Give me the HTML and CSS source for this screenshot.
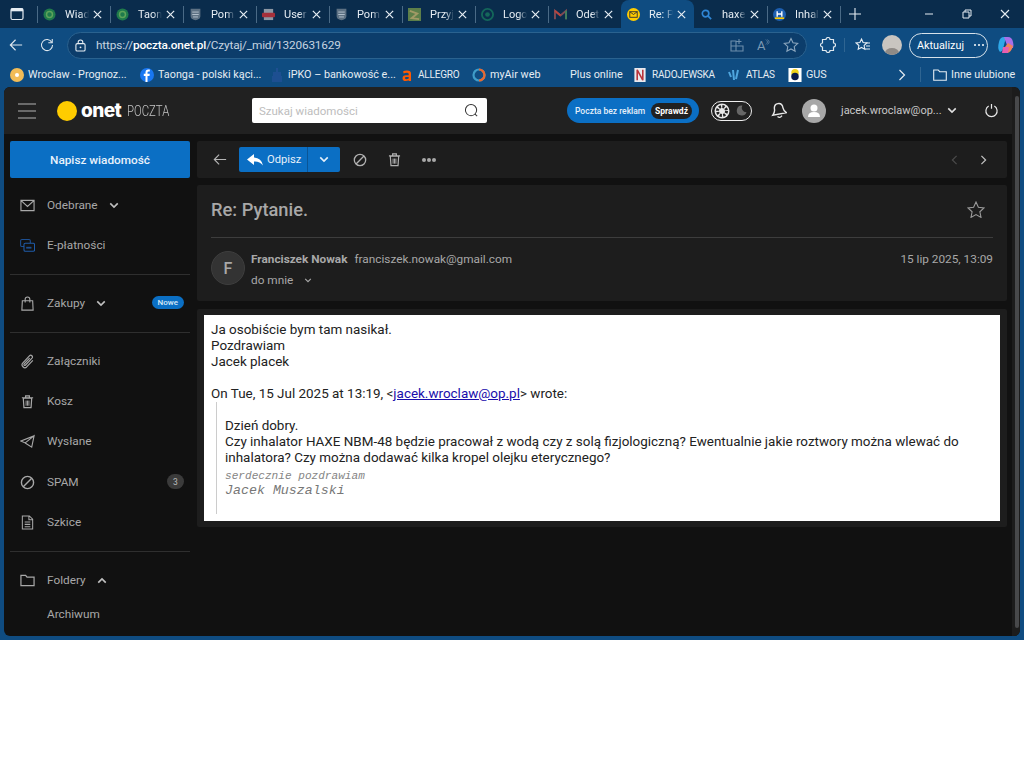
FILE: index.html
```html
<!DOCTYPE html>
<html lang="pl">
<head>
<meta charset="utf-8">
<title>Re: Pytanie.</title>
<link rel="stylesheet" href="styles.css">
</head>
<body>
<svg class="defs" width="0" height="0" aria-hidden="true">
  <symbol id="x" viewBox="0 0 12 12"><path d="M2 2l8 8M10 2l-8 8" fill="none" stroke="currentColor" stroke-width="1.300"/></symbol>
  <symbol id="swirl" viewBox="0 0 14 14"><circle cx="7" cy="7" r="6.500" fill="#1f7a4c"/><circle cx="7" cy="7" r="3.200" fill="none" stroke="#5da35a" stroke-width="1.600"/></symbol>
  <symbol id="philips" viewBox="0 0 14 16"><path d="M1 1h12v9c0 3-3 4-6 5-3-1-6-2-6-5z" fill="#5d7183"/><path d="M3 5h8M3 8h8M4 11h6" stroke="#c4d0da" stroke-width="1"/></symbol>
  <symbol id="chev" viewBox="0 0 12 8"><path d="M1.500 1.500L6 6l4.500-4.500" fill="none" stroke="currentColor" stroke-width="1.900"/></symbol>
  <symbol id="trash" viewBox="0 0 14 16"><path d="M1 4h12M5 4V2h4v2M2.500 4.500h9l-.7 10H3.200z" fill="none" stroke="currentColor" stroke-width="1.300"/><path d="M5.500 7v5.500M7 7v5.500M8.500 7v5.500" stroke="currentColor"/></symbol>
  <symbol id="block" viewBox="0 0 16 16"><circle cx="8" cy="8" r="6.500" fill="none" stroke="currentColor" stroke-width="1.500"/><path d="M3.500 12.500l9-9" stroke="currentColor" stroke-width="1.500"/></symbol>
</svg>

<div class="screen">
  <div class="tabstrip">
    <svg class="tabs-btn" viewBox="0 0 14 14"><rect x="1" y="1.500" width="12" height="11" rx="1.500" fill="none" stroke="#e6edf3" stroke-width="1.200"/><rect x="1" y="1.500" width="12" height="2.800" fill="#e6edf3"/></svg>
    <div class="tab sep"><svg class="ti"><use href="#swirl"/></svg><span class="tl">Wiad</span><svg class="tx"><use href="#x"/></svg></div>
    <div class="tab sep"><svg class="ti"><use href="#swirl"/></svg><span class="tl">Taon</span><svg class="tx"><use href="#x"/></svg></div>
    <div class="tab sep"><svg class="ti"><use href="#philips"/></svg><span class="tl">Pom</span><svg class="tx"><use href="#x"/></svg></div>
    <div class="tab sep"><svg class="ti" viewBox="0 0 14 14"><rect x="2" y="1" width="10" height="12" fill="#8d97a3"/><rect x="0" y="5" width="14" height="5" rx="1" fill="#a5303a"/></svg><span class="tl">User</span><svg class="tx"><use href="#x"/></svg></div>
    <div class="tab sep"><svg class="ti"><use href="#philips"/></svg><span class="tl">Pom</span><svg class="tx"><use href="#x"/></svg></div>
    <div class="tab sep"><svg class="ti" viewBox="0 0 14 14"><rect width="14" height="14" fill="#5d7f4a"/><path d="M2 3l8 3-6 5 8 1" fill="none" stroke="#a19a66" stroke-width="2"/></svg><span class="tl">Przyj</span><svg class="tx"><use href="#x"/></svg></div>
    <div class="tab sep"><svg class="ti" viewBox="0 0 14 14"><circle cx="7" cy="7" r="6" fill="none" stroke="#14675a" stroke-width="2"/><circle cx="7" cy="7" r="2.500" fill="#14675a"/></svg><span class="tl">Logo</span><svg class="tx"><use href="#x"/></svg></div>
    <div class="tab sep"><svg class="ti" viewBox="0 0 14 12"><path d="M1 11V2l6 5 6-5v9" fill="none" stroke="#7d4a55" stroke-width="2.200"/><path d="M1 2l6 5" stroke="#b8453f" stroke-width="2"/><path d="M13 2v9" stroke="#3f7f5c" stroke-width="2"/></svg><span class="tl">Odet</span><svg class="tx"><use href="#x"/></svg></div>
    <div class="tab active"><svg class="ti" viewBox="0 0 14 14"><circle cx="7" cy="7" r="7" fill="#fc0"/><rect x="3" y="4" width="8" height="6" fill="none" stroke="#333" stroke-width="1"/><path d="M3 4l4 3 4-3" fill="none" stroke="#333"/></svg><span class="tl">Re: P</span><svg class="tx"><use href="#x"/></svg></div>
    <div class="tab"><svg class="ti" viewBox="0 0 14 14"><circle cx="6" cy="6" r="3.500" fill="none" stroke="#2f86d6" stroke-width="1.800"/><path d="M8.500 8.500L12 12" stroke="#2f86d6" stroke-width="1.800"/></svg><span class="tl">haxe</span><svg class="tx"><use href="#x"/></svg></div>
    <div class="tab sep"><svg class="ti" viewBox="0 0 14 14"><circle cx="7" cy="7" r="7" fill="#1d5fb0"/><path d="M4.500 3.500v6M9.500 3.500v6M4.500 6.500h5" stroke="#fff" stroke-width="1.500"/><path d="M2 11h10" stroke="#fc0" stroke-width="1.800"/></svg><span class="tl">Inhal</span><svg class="tx"><use href="#x"/></svg></div>
    <div class="newtab sep"><svg viewBox="0 0 12 12"><path d="M6 0v12M0 6h12" stroke="#e6edf3" stroke-width="1.100"/></svg></div>
    <div class="winctl">
      <svg viewBox="0 0 10 10"><path d="M1 5h8" stroke="#e6edf3"/></svg>
      <svg viewBox="0 0 10 10"><path d="M1 3h6v6H1zM3 3V1h6v6H7" fill="none" stroke="#e6edf3"/></svg>
      <svg viewBox="0 0 10 10"><path d="M1 1l8 8M9 1l-8 8" stroke="#e6edf3" stroke-width="1.100"/></svg>
    </div>
  </div>

  <div class="toolbar">
    <svg class="nav-ic" viewBox="0 0 16 16"><path d="M15 8H1.500M7.500 2L1.500 8l6 6" fill="none" stroke="#dfe8ef" stroke-width="1.300"/></svg>
    <svg class="nav-ic reload" viewBox="0 0 16 16"><path d="M13.500 5A6.300 6.300 0 1 0 14.300 8" fill="none" stroke="#dfe8ef" stroke-width="1.200"/><path d="M14 1v4.500H9.500" fill="none" stroke="#dfe8ef" stroke-width="1.200"/></svg>
    <div class="address">
      <svg class="lock" viewBox="0 0 12 14"><rect x="1" y="5" width="10" height="8" rx="1.500" fill="none" stroke="#e6edf3" stroke-width="1.200"/><path d="M3.500 5V3.500a2.500 2.500 0 0 1 5 0V5" fill="none" stroke="#e6edf3" stroke-width="1.200"/><circle cx="6" cy="9" r="1" fill="#e6edf3"/></svg>
      <span class="url">https://<b>poczta.onet.pl</b>/Czytaj/_mid/1320631629</span>
      <svg class="addr-ic" viewBox="0 0 14 14"><path d="M1 3h5v10H1zM6 8h7v5H6zM1 8h5M9 1v5M6.500 3.500h5" fill="none" stroke="#6d8eab" stroke-width="1.100"/></svg>
      <span class="readout">A<svg viewBox="0 0 6 8"><path d="M1 1q2 1.500 2 3T1 7M3 1q2 1.500 2 3T3 7" fill="none" stroke="#6d8eab" stroke-width=".8"/></svg></span>
      <svg class="addr-star" viewBox="0 0 16 16"><path d="M8 1.500l2 4.300 4.700.6-3.500 3.200.9 4.700L8 12l-4.100 2.300.9-4.700L1.300 6.400 6 5.800z" fill="none" stroke="#8ba6be" stroke-width="1.100"/></svg>
    </div>
    <svg class="tool-ic ext" viewBox="0 0 16 16"><path d="M6 2.500a2 2 0 0 1 4 0h3.500V6a2 2 0 0 1 0 4v3.500H10a2 2 0 0 1-4 0H2.500V10a2 2 0 0 1 0-4V2.500z" fill="none" stroke="#dfe8ef" stroke-width="1.200"/></svg>
    <span class="tool-sep"></span>
    <svg class="tool-ic" viewBox="0 0 16 16"><path d="M6.500 2l1.600 3.500 3.700.5-2.700 2.500.7 3.700-3.300-1.800L3.200 12.200l.7-3.700L1.200 6l3.700-.5z" fill="none" stroke="#e6edf3" stroke-width="1.100"/><path d="M11 6h4M11 9h4M10 12h5" stroke="#e6edf3"/></svg>
    <span class="profile"><i></i></span>
    <div class="update"><span>Aktualizuj</span><span class="dots"><i></i><i></i><i></i></span></div>
    <svg class="copilot" viewBox="0 0 20 20"><path d="M3 7q1-5 5-5h2L7 14q-1 3-3 3-3-3-1-10z" fill="#2fa8e8"/><path d="M8 2h4q4 0 5 5 1 3 0 6h-5z" fill="#a870e8"/><path d="M7 18h4q4 0 6-7l-5-3-3 4z" fill="#f2825a"/><path d="M7 12h6l-1 6H6z" fill="#e85fb0"/></svg>
  </div>

  <div class="bookmarks">
    <div class="bm"><svg class="bi" viewBox="0 0 14 14"><circle cx="7" cy="7" r="7" fill="#f2bc57"/><circle cx="7" cy="7" r="2" fill="#fff"/></svg>Wrocław - Prognoz...</div>
    <div class="bm"><svg class="bi" viewBox="0 0 14 14"><circle cx="7" cy="7" r="7" fill="#1877f2"/><path d="M7.500 14V8H9.500l.3-2.200H7.500V4.500q0-1 1.200-1h1.100V1.600H8.300Q5.500 1.600 5.500 4.400v1.400H3.800V8h1.700v6z" fill="#fff"/></svg>Taonga - polski kąci...</div>
    <div class="bm"><svg class="bi" viewBox="0 0 14 14"><path d="M6 0h2v4H6zM3 4h8v4H3zM2 8h10v6H2z" fill="#1d4f91"/></svg>iPKO – bankowość e...</div>
    <div class="bm caps"><svg class="bi" viewBox="0 0 14 14"><path d="M3 3.500q1-1 4-1 4 0 4 3V13H8.700v-.8Q7.500 13 5.500 13 2.500 13 2.500 10.200t3.500-3H8.700V6q0-1.200-2-1.200-1.500 0-3 .8zM8.700 9H6.200q-1.300 0-1.300 1.100t1.300 1.100q1.400 0 2.500-.7z" fill="#ff5a00"/></svg>ALLEGRO</div>
    <div class="bm"><svg class="bi" viewBox="0 0 14 14"><circle cx="7" cy="7" r="5.500" fill="none" stroke="#3f9cc8" stroke-width="2.200"/><path d="M7 1.500a5.500 5.500 0 0 1 0 11" fill="none" stroke="#e8672f" stroke-width="2.200"/></svg>myAir web</div>
    <div class="bm">Plus online</div>
    <div class="bm caps"><svg class="bi narrow" viewBox="0 0 12 15"><rect width="12" height="15" fill="#e9e9ee"/><path d="M3 13V2l6 11V2" fill="none" stroke="#b8343c" stroke-width="1.700"/></svg>RADOJEWSKA</div>
    <div class="bm caps"><svg class="bi narrow" viewBox="0 0 12 12"><path d="M1 3l2 5M5 1l1 10M10 1L8 10" stroke="#4fa6de" stroke-width="2"/></svg>ATLAS</div>
    <div class="bm"><svg class="bi" viewBox="0 0 14 15"><rect width="14" height="15" fill="#fff"/><circle cx="7" cy="5" r="4" fill="#f2d21b"/><circle cx="7" cy="9" r="4" fill="#0c1c4d"/></svg>GUS</div>
    <svg class="bm-more" viewBox="0 0 8 12"><path d="M1.500 1l5 5-5 5" fill="none" stroke="#e6edf3" stroke-width="1.200"/></svg>
    <span class="bm-sep"></span>
    <div class="bm bm-other"><svg class="bi" viewBox="0 0 14 12"><path d="M.7 11.300V1h4.500l1.500 1.700h6.600v8.600z" fill="none" stroke="#e6edf3" stroke-width="1.100"/></svg>Inne ulubione</div>
  </div>

  <div class="appframe">
    <div class="app">
      <div class="appmain">
        <header class="apphead">
          <div class="burger"><i></i><i></i><i></i></div>
          <div class="logo"><span class="sunny"></span><span class="onet">onet</span><span class="poczta">POCZTA</span></div>
          <div class="search"><span>Szukaj wiadomości</span><svg viewBox="0 0 16 16"><circle cx="7.500" cy="7.500" r="6" fill="none" stroke="#333" stroke-width="1.100"/><path d="M11.800 11.800l2.200 2.200" stroke="#333" stroke-width="1.100"/></svg></div>
          <div class="promo"><span>Poczta bez reklam</span><b>Sprawdź</b></div>
          <div class="theme">
            <svg viewBox="0 0 16 16"><circle cx="8" cy="8" r="7.500" fill="#e8e8e8"/><circle cx="8" cy="8" r="4.500" fill="none" stroke="#222" stroke-width="3" stroke-dasharray="2.200 1.300"/></svg>
            <svg viewBox="0 0 12 12"><path d="M7 .5a5.500 5.500 0 1 0 4.500 7.500A5 5 0 0 1 7 .5z" fill="#666"/></svg>
          </div>
          <svg class="bell" viewBox="0 0 16 17"><path d="M8 1.500c3 0 4.300 2.200 4.300 5 0 3 1.500 4.300 2.700 5.500H1c1.200-1.200 2.700-2.500 2.700-5.500 0-2.800 1.300-5 4.300-5z" fill="none" stroke="#e8e8e8" stroke-width="1.400" transform="rotate(-10 8 8)"/><path d="M6.500 14.500q2.500 2 4.500-.8" fill="none" stroke="#e8e8e8" stroke-width="1.300"/></svg>
          <div class="user-av"><svg viewBox="0 0 24 24"><circle cx="12" cy="9" r="3.500" fill="#fff"/><path d="M6 18q0-5 6-5t6 5z" fill="#fff"/></svg></div>
          <span class="email">jacek.wroclaw@op...</span>
          <svg class="email-chev"><use href="#chev"/></svg>
          <svg class="power" viewBox="0 0 16 16"><path d="M5 3.300a6 6 0 1 0 6 0M8 1v5" fill="none" stroke="#e8e8e8" stroke-width="1.300"/></svg>
        </header>

        <div class="columns">
          <aside class="sidebar">
            <div class="compose">Napisz wiadomość</div>
            <nav class="nav">
              <div class="item"><svg class="ic" viewBox="0 0 16 14"><path d="M1 1.500h14v11H1zM1.500 2l6.500 6 6.500-6" fill="none" stroke="currentColor" stroke-width="1.200"/></svg><span>Odebrane</span><svg class="ch"><use href="#chev"/></svg></div>
              <div class="item"><svg class="ic" viewBox="0 0 17 15"><rect x=".7" y=".7" width="11" height="8" rx="1.500" fill="none" stroke="#1d4f91" stroke-width="1.200"/><rect x="4.500" y="5" width="12" height="9" rx="1.500" fill="#111" stroke="#1f5ba8" stroke-width="1.200"/><rect x="7" y="9" width="6" height="2" fill="#1d4f91"/></svg><span>E-płatności</span></div>
              <hr>
              <div class="item"><svg class="ic" viewBox="0 0 14 16"><path d="M1.500 5h11l.5 10H1zM4.500 7V3.500a2.500 2.500 0 0 1 5 0V7" fill="none" stroke="currentColor" stroke-width="1.200"/></svg><span>Zakupy</span><svg class="ch"><use href="#chev"/></svg><em class="new">Nowe</em></div>
              <hr>
              <div class="item"><svg class="ic" viewBox="2 1 13 14"><path d="M13.500 7l-6 6.300c-2 1.700-5.500-1.500-3.500-3.800l6.500-7c1.300-1.200 3.500.8 2.200 2.300L6.500 11.500c-.7.600-1.800-.3-1.100-1.200l5.100-5.500" fill="none" stroke="currentColor" stroke-width="1.100"/></svg><span>Załączniki</span></div>
              <div class="item"><svg class="ic"><use href="#trash"/></svg><span>Kosz</span></div>
              <div class="item"><svg class="ic" viewBox="0 0 16 14"><path d="M15 1L1 6.500l4.500 2L15 1 12.500 13 5.500 8.500" fill="none" stroke="currentColor" stroke-width="1.200"/></svg><span>Wysłane</span></div>
              <div class="item spam"><svg class="ic"><use href="#block"/></svg><span>SPAM</span><em class="count">3</em></div>
              <div class="item"><svg class="ic" viewBox="0 0 13 16"><path d="M1 1h7.500L12 4.500V15H1zM8 1v4h4M3.500 7.500h6M3.500 10h6M3.500 12.500h6" fill="none" stroke="currentColor" stroke-width="1.100"/></svg><span>Szkice</span></div>
              <hr>
              <div class="item"><svg class="ic" viewBox="0 0 16 13"><path d="M1 12V1h5l1.500 2H15v9z" fill="none" stroke="currentColor" stroke-width="1.300"/></svg><span>Foldery</span><svg class="ch up"><use href="#chev"/></svg></div>
              <div class="item sub"><span>Archiwum</span></div>
            </nav>
          </aside>

          <main class="content">
            <div class="actions">
              <svg class="back" viewBox="0 0 16 14"><path d="M15 7H1.500M7 1.500L1.500 7 7 12.500" fill="none" stroke="#b5b5b5" stroke-width="1.300"/></svg>
              <div class="reply">
                <span class="reply-main"><svg viewBox="0 0 16 12"><path d="M7 0L0 5.500 7 11V7.500q5.500-.5 9 4Q14.500 4 7 3.500z" fill="#fff"/></svg>Odpisz</span>
                <span class="reply-more"><svg><use href="#chev"/></svg></span>
              </div>
              <svg class="act"><use href="#block"/></svg>
              <svg class="act trash"><use href="#trash"/></svg>
              <span class="more"><i></i><i></i><i></i></span>
              <svg class="pg dim" viewBox="0 0 8 12"><path d="M6.500 1l-5 5 5 5" fill="none" stroke="currentColor" stroke-width="1.500"/></svg>
              <svg class="pg" viewBox="0 0 8 12"><path d="M1.500 1l5 5-5 5" fill="none" stroke="currentColor" stroke-width="1.500"/></svg>
            </div>

            <section class="mailhead">
              <div class="subject"><h1>Re: Pytanie.</h1><svg viewBox="0 0 18 17"><path d="M9 1l2.400 5.200 5.600.7-4.100 3.900 1.100 5.600L9 13.600 4 16.400l1.100-5.600L1 6.900l5.600-.7z" fill="none" stroke="#9a9a9a" stroke-width="1.100"/></svg></div>
              <div class="meta">
                <div class="avatar">F</div>
                <div class="who">
                  <div class="from"><b>Franciszek Nowak</b><span>franciszek.nowak@gmail.com</span></div>
                  <div class="tome">do mnie<svg><use href="#chev"/></svg></div>
                </div>
                <div class="date">15 lip 2025, 13:09</div>
              </div>
            </section>

            <section class="mailcard">
              <div class="mailbody">
                <div>Ja osobiście bym tam nasikał.</div>
                <div>Pozdrawiam</div>
                <div>Jacek placek</div>
                <div><br></div>
                <div>On Tue, 15 Jul 2025 at 13:19, &lt;<a href="#">jacek.wroclaw@op.pl</a>&gt; wrote:</div>
                <blockquote>
                  <div>Dzień dobry.</div>
                  <div>Czy inhalator HAXE NBM-48 będzie pracował z wodą czy z solą fizjologiczną? Ewentualnie jakie roztwory można wlewać do inhalatora? Czy można dodawać kilka kropel olejku eterycznego?</div>
                  <div class="sig1">serdecznie pozdrawiam</div>
                  <div class="sig2">Jacek Muszalski</div>
                </blockquote>
              </div>
            </section>
          </main>
        </div>
      </div>
      <div class="scrollbar"><i></i></div>
    </div>
  </div>
</div>
</body>
</html>
```

FILE: styles.css
```css
* { box-sizing: border-box; }
html, body { margin: 0; background: #fff; }
body { font-family: Roboto, "Noto Sans", sans-serif; overflow: hidden; }
.defs { position: absolute; }
svg { display: block; flex: none; }
.screen { width: 1024px; height: 640px; display: flex; flex-direction: column; background: #0f4c81; overflow: hidden; }

/* tabs */
.tabstrip { height: 28px; background: #0a2c4c; display: flex; align-items: stretch; color: #e6edf3; }
.tabs-btn { width: 14px; height: 14px; margin: 7px 13px 0 10px; }
.tab { width: 73px; height: 28px; position: relative; display: flex; align-items: center; padding-left: 6px; font-size: 11px; }
.tab.sep::before, .newtab.sep::before { content: ""; position: absolute; left: 0; top: 6px; height: 17px; width: 1px; background: #4a6a86; }
.tab.active { background: #0f4c81; border-radius: 8px 8px 0 0; }
.ti { width: 13px; height: 13px; margin-right: 9px; }
.tl { width: 24px; white-space: nowrap; -webkit-mask-image: linear-gradient(90deg, #000 65%, transparent); mask-image: linear-gradient(90deg, #000 65%, transparent); }
.tx { width: 11px; height: 11px; margin-left: 3px; }
.newtab { width: 30px; position: relative; display: flex; align-items: center; padding-left: 9px; }
.newtab svg { width: 12px; height: 12px; }
.winctl { margin-left: auto; width: 114px; display: flex; align-items: center; justify-content: space-around; }
.winctl svg { width: 10px; height: 10px; }

/* toolbar */
.toolbar { height: 34px; display: flex; align-items: center; padding-left: 9px; }
.nav-ic { width: 14px; height: 14px; }
.reload { margin-left: 17px; }
.address { width: 740px; height: 27px; margin-left: 13px; border-radius: 14px; background: #0c3d6b; border: 1px solid #2a628f; display: flex; align-items: center; padding-left: 7px; color: #c6d4e0; font-size: 11.800px; letter-spacing: -.16px; }
.lock { width: 11px; height: 13px; margin-right: 10px; }
.url b { font-weight: 500; color: #fff; }
.addr-ic { width: 14px; height: 14px; margin-left: auto; }
.addr-star { width: 16px; height: 16px; margin-left: 11px; margin-right: 7px; }
.readout { margin-left: 13px; color: #7e9bb4; font-size: 13px; display: flex; width: 15px; }
.readout svg { width: 5px; height: 8px; }
.tool-ic { width: 16px; height: 16px; }
.ext { margin-left: 13px; }
.tool-sep { width: 1px; height: 14px; margin: 0 10px 0 8px; background: #2f6592; }
.profile { width: 20px; height: 20px; border-radius: 50%; margin-left: 11px; background: #c9c5c0; position: relative; overflow: hidden; }
.profile i { position: absolute; left: 3px; top: 13px; width: 14px; height: 10px; border-radius: 50%; background: #8f8a86; }
.update { width: 79px; height: 25px; margin-left: 7px; border: 1px solid #d7e2ea; border-radius: 13px; display: flex; align-items: center; padding-left: 7px; color: #fff; font-size: 10.800px; gap: 10px; }
.dots { display: flex; gap: 2px; }
.dots i { width: 2px; height: 2px; border-radius: 50%; background: #fff; }
.copilot { width: 20px; height: 20px; margin-left: 8px; }

/* bookmarks */
.bookmarks { height: 25px; display: grid; grid-template-columns: 130px 130px 130px 72px 98px 64px 94px 60px 110px 22px 13px 1fr; align-items: center; padding-left: 10px; color: #e6edf3; font-size: 10.800px; white-space: nowrap; }
.bm { display: flex; align-items: center; gap: 4px; }
.bm.caps { font-size: 10px; letter-spacing: -.2px; }
.bi { width: 14px; height: 14px; }
.bi.narrow { width: 12px; margin-right: 2px; }
.bm-more { width: 8px; height: 12px; }
.bm-sep { width: 1px; height: 15px; background: #2f6592; }

/* app */
.appframe { flex: 1; padding: 0 4px 4px 4px; min-height: 0; }
.app { height: 100%; background: #111; border-radius: 6px; display: flex; overflow: hidden; font-family: Roboto, "Liberation Sans", sans-serif; color: #a8a8a8; }
.appmain { flex: 1; min-width: 0; display: flex; flex-direction: column; }
.scrollbar { width: 8px; flex: none; background: #1c1c1c; padding: 9px 1px 8px 3px; }
.scrollbar i { display: block; height: 100%; background: #48494b; border-radius: 2px; }
.apphead { height: 47px; flex: none; background: #212121; display: flex; align-items: center; padding-left: 14px; }
.burger { width: 18px; height: 16px; display: flex; flex-direction: column; justify-content: space-between; margin-right: 21px; }
.burger i { height: 2px; background: #6a6a6a; }
.logo { display: flex; align-items: center; width: 195px; }
.sunny { width: 20px; height: 20px; border-radius: 50%; background: #fc0; }
.onet { font-family: Inter, Lato, sans-serif; font-weight: 800; font-size: 19px; color: #fff; margin-left: 4px; letter-spacing: -.6px; }
.poczta { font-size: 14px; color: #c4c4c4; margin-left: 6px; transform: scaleX(.81); transform-origin: left; font-weight: 300; }
.search { width: 235px; height: 25px; background: #fff; border-radius: 2px; display: flex; align-items: center; justify-content: space-between; padding: 0 8px 0 7px; color: #bdbdbd; font-size: 11.500px; }
.search svg { width: 15px; height: 15px; }
.promo { width: 132px; height: 25px; margin-left: 80px; border-radius: 13px; background: #0b6fc4; display: flex; align-items: center; justify-content: space-between; padding: 0 7px 0 8px; font-size: 8.500px; font-weight: 500; color: #e4f0fa; white-space: nowrap; }
.promo b { background: #212121; color: #fff; border-radius: 8px; padding: 3px 4px; font-weight: 700; }
.theme { width: 41px; height: 20px; margin-left: 12px; border: 1.500px solid #eee; border-radius: 10px; display: flex; align-items: center; justify-content: space-between; padding: 0 3px 0 1.500px; }
.theme svg:first-child { width: 16px; height: 16px; }
.theme svg:last-child { width: 11px; height: 11px; margin-right: 1px; }
.bell { width: 16px; height: 17px; margin-left: 19px; }
.user-av { width: 24px; height: 24px; margin-left: 15px; border-radius: 50%; background: #a8a8a8; }
.user-av svg { width: 24px; height: 24px; }
.email { margin-left: 15px; font-size: 11px; color: #c8c8c8; white-space: nowrap; width: 106px; }
.email-chev { width: 10px; height: 7px; color: #e0e0e0; }
.power { width: 15px; height: 15px; margin-left: 27px; }

.columns { flex: 1; min-height: 0; display: flex; padding: 7px 5px 0 6px; }
.sidebar { width: 180px; flex: none; }
.compose { height: 37px; background: #0b6fc4; border-radius: 2px; color: #e8f2fb; font-size: 11.800px; font-weight: 500; display: flex; align-items: center; justify-content: center; }
.nav { padding-top: 7px; }
.nav hr { margin: 9px 0 8px; border: 0; border-top: 1px solid #2f2f2f; }
.item { height: 40px; display: flex; align-items: center; padding-left: 10px; font-size: 11.800px; position: relative; }
.item.spam { margin-top: 1px; }
.item.sub { height: 28px; padding-left: 37px; }
.ic { width: 15px; height: 15px; margin-right: 12px; color: #a8a8a8; }
.ch { width: 10px; height: 7px; margin-left: 11px; color: #c0c0c0; }
.ch.up { transform: rotate(180deg); }
.new { position: absolute; right: 6px; top: 13px; background: #0b6fc4; color: #d8e9f8; border-radius: 7px; font-style: normal; font-size: 8px; font-weight: 500; padding: 2px 6px; }
.count { position: absolute; right: 6px; top: 12px; width: 17px; height: 15px; border-radius: 8px; background: #3b3b3b; color: #bbb; font-style: normal; font-size: 8.500px; display: flex; align-items: center; justify-content: center; }

.content { flex: 1; min-width: 0; margin-left: 7px; }
.actions { height: 37px; background: #1d1d1d; border-radius: 2px; display: flex; align-items: center; padding-left: 16px; color: #a8a8a8; }
.back { width: 14px; height: 13px; }
.reply { margin-left: 12px; height: 25px; display: flex; border-radius: 2px; overflow: hidden; background: #0b6fc4; color: #e6f0fa; font-size: 11.200px; }
.reply-main { width: 69px; display: flex; align-items: center; padding-left: 8px; gap: 4px; border-right: 1px solid #0a5596; }
.reply-main svg { width: 16px; height: 12px; }
.reply-more { width: 32px; display: flex; align-items: center; justify-content: center; }
.reply-more svg { width: 10px; height: 7px; }
.act { width: 14px; height: 14px; margin-left: 13px; color: #b0b0b0; }
.act.trash { margin-left: 21px; height: 15px; width: 13px; }
.more { display: flex; gap: 1px; margin-left: 21px; }
.more i { width: 4px; height: 4px; border-radius: 50%; background: #a8a8a8; }
.pg { width: 7px; height: 10px; color: #c0c0c0; margin-left: 22px; }
.pg.dim { color: #4a4a4a; margin-left: auto; }
.pg:last-child { margin-right: 20px; }

.mailhead { margin-top: 7px; height: 116px; background: #1d1d1d; border-radius: 2px; padding: 0 14px; }
.subject { height: 53px; display: flex; align-items: center; justify-content: space-between; border-bottom: 1px solid #3d3d3d; padding-bottom: 3px; }
.subject h1 { margin: 0; font-size: 18.300px; font-weight: 500; color: #a8a8a8; }
.subject svg { width: 18px; height: 17px; margin-right: 8px; }
.meta { display: flex; padding-top: 13px; }
.avatar { width: 34px; height: 34px; border-radius: 50%; background: #333; border: 1px solid #3e3e3e; display: flex; align-items: center; justify-content: center; font-size: 16px; font-weight: 500; color: #a8a8a8; }
.who { margin-left: 6px; font-size: 11.800px; line-height: 20px; margin-top: -2px; flex: 1; }
.from b { font-weight: 700; }
.from span { margin-left: 7px; }
.tome { display: flex; align-items: center; margin-top: 1px; }
.tome svg { width: 8px; height: 5px; margin-left: 11px; }
.date { font-size: 11.800px; line-height: 20px; margin-top: -2px; }

.mailcard { margin-top: 8px; background: #1d1d1d; padding: 6px 7px; border-radius: 2px; }
.mailbody { background: #fff; color: #222; padding: 7px 6px 6px 7px; font-family: Roboto, "Liberation Sans", sans-serif; font-size: 13.450px; line-height: 16px; height: 206px; }
.mailbody a { color: #1a0dab; }
.mailbody blockquote { margin: 0 0 0 5px; padding: 16px 0 16px 8px; border-left: 1px solid #ccc; }
.sig1 { font-family: "Liberation Mono", monospace; font-style: italic; font-size: 11.100px; color: #858585; line-height: 16px; margin-top: 2px; }
.sig2 { font-family: "Liberation Mono", monospace; font-style: italic; font-size: 13.300px; color: #777; line-height: 14px; }
```
